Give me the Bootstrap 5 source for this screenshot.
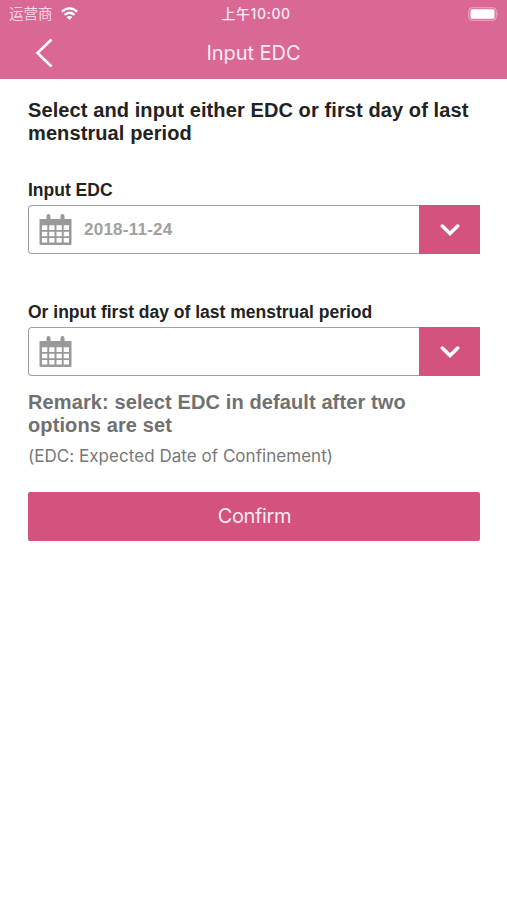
<!DOCTYPE html>
<html lang="en">
<head>
<meta charset="utf-8">
<meta name="viewport" content="width=device-width, initial-scale=1">
<title>Input EDC</title>
<link href="https://cdn.jsdelivr.net/npm/bootstrap@5.3.0/dist/css/bootstrap.min.css" rel="stylesheet">
<style>
body{font-family:"Liberation Sans",Arial,sans-serif;color:#222;background:#fff}
.app-head{background:#da6894;height:79px;color:#ffeaf3}
.status{height:27px;padding:0 8px 0 9px;font:14px/27px Inter,"Noto Sans CJK SC",sans-serif}
.status>div{flex:1 1 0}
.carrier{font-size:14.5px;color:#fbd3e2}
.clock{font-weight:500;font-size:14px;letter-spacing:.6px;padding-left:4px}
.title-bar{height:52px}
.back{width:20px;height:32px;left:34px;top:10px}
.page-title{font:400 20px/52px Inter,sans-serif;letter-spacing:-.05px}
.content{padding:20px 27px 0 28px}
.lead-text{font-size:20px;line-height:22.5px;letter-spacing:.1px;margin-bottom:35px}
.field-label{font-size:17.5px;line-height:22px;margin-bottom:4px}
.date-field{height:49px}
.edc-field{margin-bottom:47px}
.date-box{border:1.5px solid #a0a0a0;border-right:0;border-radius:4px 0 0 4px;padding-left:10px;color:#a0a0a0;font-size:17px;letter-spacing:.25px}
.pick{width:61px;background:#d3527e}
.remark{font-size:20px;line-height:22.5px;letter-spacing:.11px;color:#707070;margin:15px 0 8px}
.note{font:400 17px/24px Inter,sans-serif;letter-spacing:.04px;color:#777;margin-bottom:24px}
.confirm{height:49px;background:#d3527e;color:#ffeaf3;border-radius:2px;font:400 20px/49px Inter,sans-serif;letter-spacing:-.35px;padding:0 0 0 1px}
</style>
<script src="https://cdn.jsdelivr.net/npm/bootstrap@5.3.0/dist/js/bootstrap.bundle.min.js"></script>
</head>
<body>
<svg class="d-none" xmlns="http://www.w3.org/2000/svg">
  <symbol id="calendar" viewBox="0 0 32 32"><path fill="#999" fill-rule="evenodd" d="M0 5h7V2q0-2 2-2t2 2v3h10V2q0-2 2-2t2 2v3h7v25q0 1-1 1H1q-1 0-1-1zM2.500 11.300h5.300v4.700H2.500zm7.200 0h5.300v4.700H9.700zm7.300 0h5.300v4.700H17zm7.200 0h5.300v4.700h-5.300zM2.500 17.700h5.300v4.500H2.500zm7.200 0h5.300v4.500H9.700zm7.300 0h5.300v4.500H17zm7.200 0h5.300v4.500h-5.300zM2.500 23.900h5.300v4.700H2.500zm7.200 0h5.300v4.700H9.700zm7.300 0h5.300v4.700H17zm7.200 0h5.300v4.700h-5.300z"/></symbol>
  <symbol id="chevron" viewBox="0 0 20 12"><path fill="none" stroke="#fff" stroke-width="3.500" stroke-linecap="round" d="M2.300 2l7.700 7.500L17.700 2"/></symbol>
</svg>
<header class="app-head">
  <div class="status d-flex">
    <div class="d-flex align-items-center"><span class="carrier">运营商</span>
      <svg class="ms-2" width="17" height="13" viewBox="0 0 17 13"><g fill="none" stroke="#fff" stroke-width="2.300"><path d="M.8 4.600q7.700-6.800 15.400 0"/><path d="M3.600 7.900q4.900-4.200 9.800 0"/></g><path fill="#fff" d="M5.600 9.900q2.900-2 5.800 0L8.500 13z"/></svg>
    </div>
    <span class="clock">上午10:00</span>
    <div class="d-flex align-items-center justify-content-end"><svg width="31" height="14" viewBox="0 0 31 14"><rect x=".8" y=".8" width="27.400" height="12.400" rx="3" fill="none" stroke="#efb0c9"/><rect x="2.500" y="2.200" width="24" height="9.600" rx="1.500" fill="#fff"/><path d="M29.500 5q1.500 2 0 4z" fill="#efb0c9"/></svg></div>
  </div>
  <div class="title-bar position-relative text-center">
    <svg class="back position-absolute" viewBox="0 0 20 32"><path d="M17.500 2.500L3.500 16l14 13.500" fill="none" stroke="#fff" stroke-width="2.500"/></svg>
    <h1 class="page-title m-0">Input EDC</h1>
  </div>
</header>
<main class="content">
  <h2 class="lead-text fw-bold">Select and input either EDC or first day of last<br>menstrual period</h2>
  <label class="field-label fw-bold d-block">Input EDC</label>
  <div class="date-field edc-field d-flex">
    <div class="date-box flex-fill d-flex align-items-center fw-bold"><svg class="me-2" width="33" height="32"><use href="#calendar"/></svg><span class="ms-1">2018-11-24</span></div>
    <button class="pick border-0 p-0 d-flex align-items-center justify-content-center" aria-label="Choose date"><svg width="20" height="12"><use href="#chevron"/></svg></button>
  </div>
  <label class="field-label fw-bold d-block">Or input first day of last menstrual period</label>
  <div class="date-field d-flex">
    <div class="date-box flex-fill d-flex align-items-center"><svg width="33" height="32"><use href="#calendar"/></svg></div>
    <button class="pick border-0 p-0 d-flex align-items-center justify-content-center" aria-label="Choose date"><svg width="20" height="12"><use href="#chevron"/></svg></button>
  </div>
  <p class="remark fw-bold">Remark: select EDC in default after two<br>options are set</p>
  <p class="note">(EDC: Expected Date of Confinement)</p>
  <button class="confirm border-0 w-100 d-block">Confirm</button>
</main>
</body>
</html>
